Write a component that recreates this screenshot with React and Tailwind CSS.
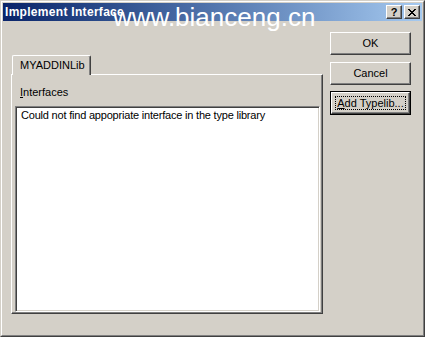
export default function App() {
  const raised =
    "border border-t-white border-l-white border-r-[#404040] border-b-[#404040] shadow-[inset_-1px_-1px_0_#808080]";
  return (
    <div className="relative w-[425px] h-[337px] overflow-hidden bg-[#d4d0c8] font-['Liberation_Sans',Arial,sans-serif] text-[11px] text-black border border-t-[#d4d0c8] border-l-[#d4d0c8] border-r-[#404040] border-b-[#404040]">
      <div className="h-full flex flex-col p-px border border-t-white border-l-white border-r-[#808080] border-b-[#808080]">
        {/* title bar */}
        <div className="h-[18px] flex items-center bg-gradient-to-r from-[#0a246a] to-[#a6caf0] pl-[2px] pr-[2px]">
          <span className="flex-1 text-white font-bold text-[12px] leading-[18px] tracking-[0.3px]">
            Implement Interface
          </span>
          <div className={`w-[16px] h-[14px] bg-[#d4d0c8] flex items-center justify-center ${raised}`}>
            <span className="font-bold text-[11px] leading-[11px] mt-[1px]">?</span>
          </div>
          <div className={`ml-[2px] w-[16px] h-[14px] bg-[#d4d0c8] flex items-center justify-center ${raised}`}>
            <svg width="8" height="7" viewBox="0 0 8 7" shapeRendering="crispEdges">
              <path
                fill="#000"
                d="M0 0h2v1H0zM6 0h2v1H6zM1 1h2v1H1zM5 1h2v1H5zM2 2h4v1H2zM3 3h2v1H3zM2 4h4v1H2zM1 5h2v1H1zM5 5h2v1H5zM0 6h2v1H0zM6 6h2v1H6z"
              />
            </svg>
          </div>
        </div>

        {/* body */}
        <div className="flex-1 flex pl-[8px] pr-[11px]">
          {/* tab control */}
          <div className="w-[312px] flex flex-col pt-[34px] pb-[20px]">
            <div className="h-[19px] flex">
              <div className="relative z-10 ml-px w-[79px] h-[20px] bg-[#d4d0c8] border-t border-l border-r border-t-white border-l-white border-r-[#404040] shadow-[inset_-1px_0_0_#808080] rounded-tl-[2px] rounded-tr-[2px] pl-[7px] leading-[16px] pt-[1px]">
                MYADDINLib
              </div>
            </div>
            <div className="flex-1 flex flex-col border border-t-white border-l-white border-r-[#404040] border-b-[#404040] shadow-[inset_-1px_-1px_0_#808080] pl-[3px] pr-[2px] pb-px">
              <div className="pt-[11px] pl-[5px] leading-[13px]">
                <u>I</u>nterfaces
              </div>
              <div className="mt-[7px] flex-1 bg-white border border-t-[#808080] border-l-[#808080] border-r-white border-b-white shadow-[inset_1px_1px_0_#404040,inset_-1px_-1px_0_#d4d0c8] pl-[4px] pt-[1px] leading-[12px]">
                <div className="pl-[1px] pt-[1px] tracking-[-0.2px]">
                  Could not find appopriate interface in the type library
                </div>
              </div>
            </div>
          </div>

          {/* buttons */}
          <div className="ml-[7px] w-[81px] flex flex-col pt-[11px]">
            <div className={`h-[23px] flex items-center justify-center ${raised}`}>OK</div>
            <div className={`mt-[7px] h-[23px] flex items-center justify-center ${raised}`}>Cancel</div>
            <div className="mt-[6px] h-[24px] border border-black">
              <div className={`h-full p-[3px] ${raised}`}>
                <div className="h-full flex items-center justify-center outline-1 outline-dotted outline-black -outline-offset-1">
                  <span>
                    <u>A</u>dd Typelib...
                  </span>
                </div>
              </div>
            </div>
          </div>
        </div>
      </div>

      {/* watermark */}
      <div className="absolute left-[112px] top-[3px] text-[26px] leading-[26px] text-white whitespace-nowrap">
        www.bianceng.cn
      </div>
    </div>
  );
}
